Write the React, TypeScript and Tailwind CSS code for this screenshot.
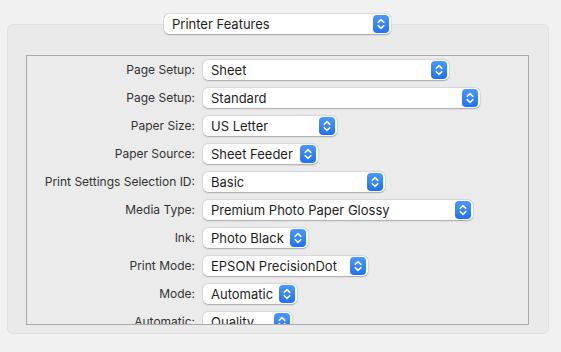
import { memo } from "react";

const rows: { label: string; value: string; w: string }[] = [
  { label: "Page Setup:", value: "Sheet", w: "w-[246px]" },
  { label: "Page Setup:", value: "Standard", w: "w-[277px]" },
  { label: "Paper Size:", value: "US Letter", w: "w-[134px]" },
  { label: "Paper Source:", value: "Sheet Feeder", w: "w-[115px]" },
  { label: "Print Settings Selection ID:", value: "Basic", w: "w-[182px]" },
  { label: "Media Type:", value: "Premium Photo Paper Glossy", w: "w-[270px]" },
  { label: "Ink:", value: "Photo Black", w: "w-[105px]" },
  { label: "Print Mode:", value: "EPSON PrecisionDot", w: "w-[165px]" },
  { label: "Mode:", value: "Automatic", w: "w-[94px]" },
  { label: "Automatic:", value: "Quality", w: "w-[89px]" },
];

function Stepper() {
  return (
    <span className="flex h-[18px] w-[16px] shrink-0 items-center justify-center rounded-[4px] bg-gradient-to-b from-[#4a98fb] to-[#1f72f2]">
      <svg width="10" height="14" viewBox="0 0 10 14" fill="none" aria-hidden="true">
        <path d="M2.2 5.4 L5 2.6 L7.8 5.4" stroke="white" strokeWidth={1.5} strokeLinecap="round" strokeLinejoin="round" />
        <path d="M2.2 8.6 L5 11.4 L7.8 8.6" stroke="white" strokeWidth={1.5} strokeLinecap="round" strokeLinejoin="round" />
      </svg>
    </span>
  );
}

function PopupComponent({ value, className }: { value: string; className: string }) {
  return (
    <div
      className={`flex h-[20px] shrink-0 items-center justify-between rounded-[5px] bg-white pl-[8px] pr-[2px] shadow-[0_0.5px_1.5px_rgba(0,0,0,0.28),0_0_0_0.5px_rgba(0,0,0,0.06)] ${className}`}
    >
      <span className="overflow-hidden whitespace-nowrap text-[13px] leading-[16px] text-[#1e1e1e]">{value}</span>
      <Stepper />
    </div>
  );
}

const Popup = memo(PopupComponent);

export default function App() {
  return (
    <div
      className="flex h-[352px] w-[561px] flex-col bg-[#f1f1f1] pl-[7px] pt-[14px]"
      style={{ fontFamily: "Inter, 'Liberation Sans', sans-serif" }}
    >
      {/* Panel selector */}
      <div className="relative z-10 ml-[157px]">
        <Popup value="Printer Features" className="w-[227px]" />
      </div>

      {/* Group box */}
      <div className="-mt-[10px] h-[310px] w-[542px] rounded-[6px] border border-[#e2e2e2] bg-[#eaeaea] pl-[18px] pt-[30px]">
        <div className="h-[270px] w-[503px] overflow-hidden border border-[#a9a9a9] bg-[#ebebeb] pt-[4px]">
          <div className="flex flex-col gap-[8px]">
            {rows.map((row, i) => (
              <div key={i} className="flex items-center gap-[8px]">
                <div className="w-[168px] shrink-0 text-right text-[12px] leading-[16px] text-[#333333]">
                  {row.label}
                </div>
                <Popup value={row.value} className={row.w} />
              </div>
            ))}
          </div>
        </div>
      </div>
    </div>
  );
}
